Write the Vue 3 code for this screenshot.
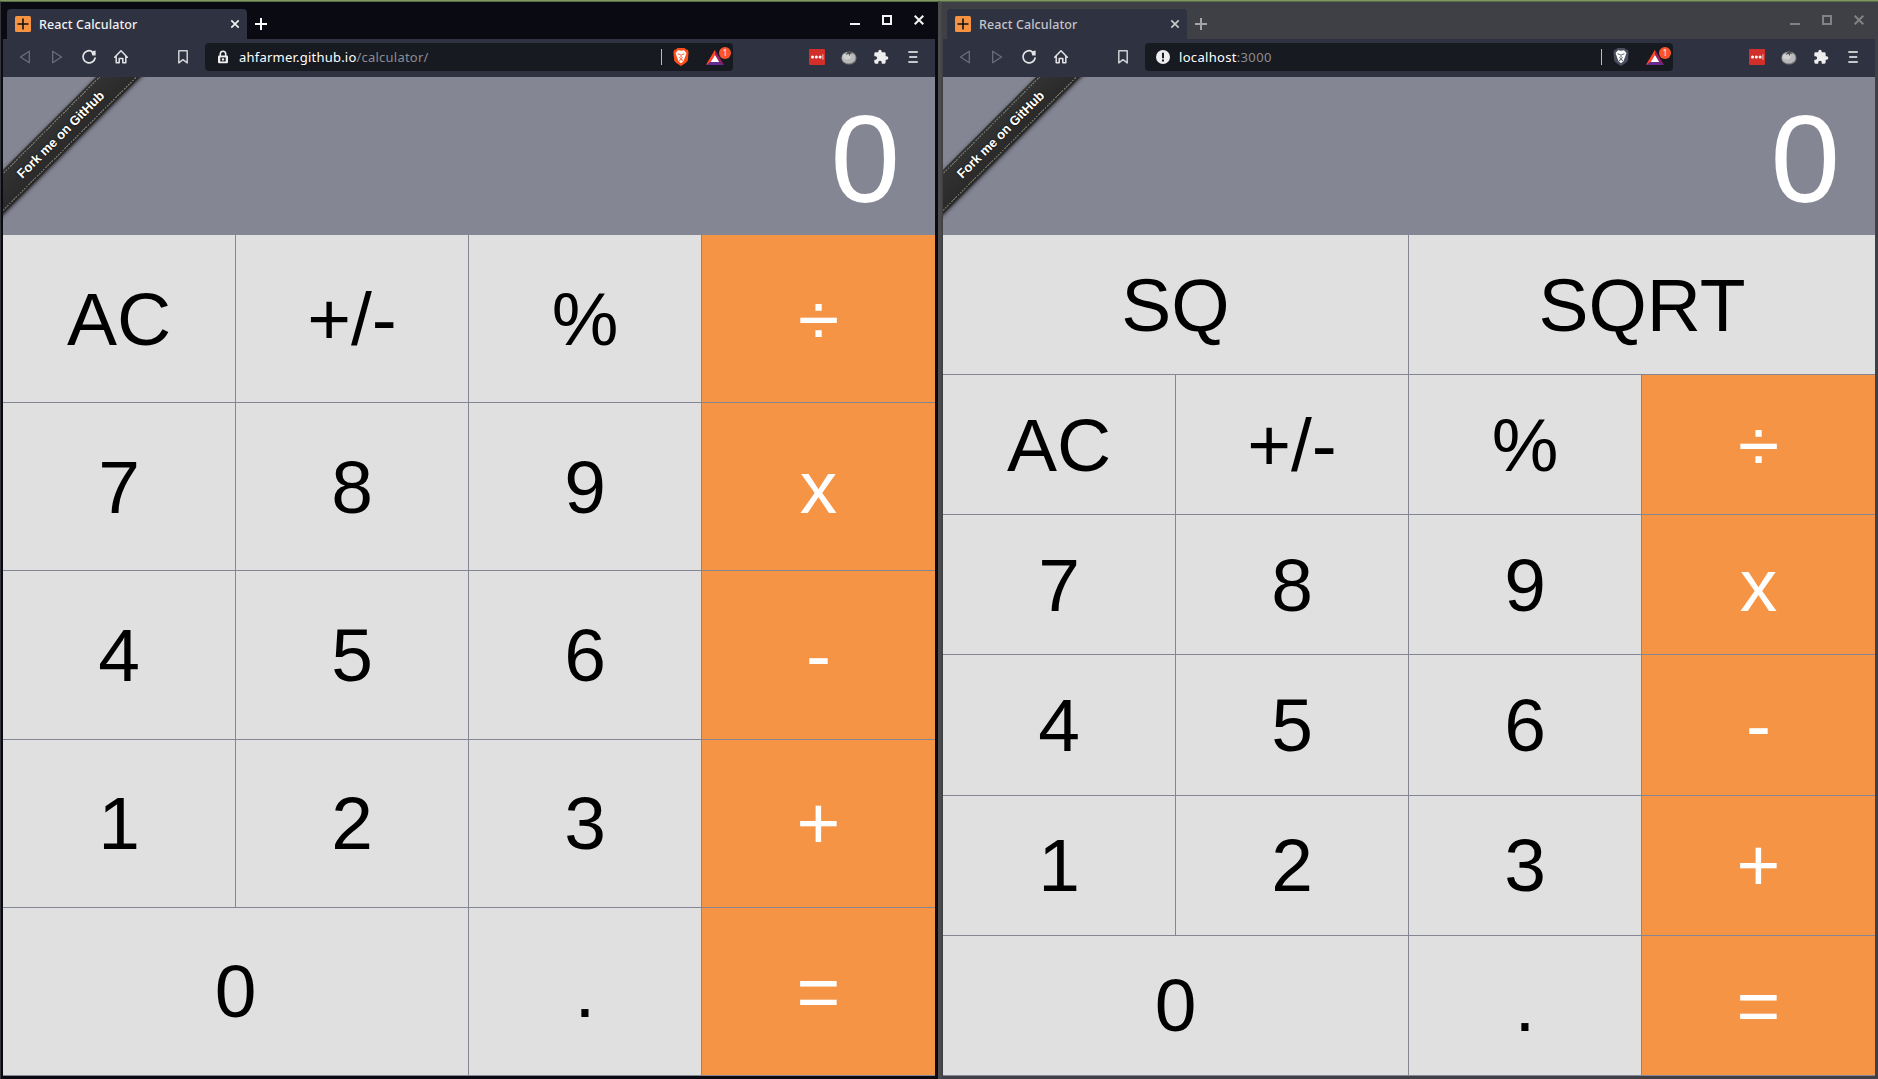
<script setup>
const common = [
  ['AC', '+/-', '%', '÷'],
  ['7', '8', '9', 'x'],
  ['4', '5', '6', '-'],
  ['1', '2', '3', '+'],
  ['0', '.', '='],
]
const windows = [
  { id: 'deployed', active: true, secure: true, host: 'ahfarmer.github.io', path: '/calculator/', rows: common },
  { id: 'local', active: false, secure: false, host: 'localhost', path: ':3000', rows: [['SQ', 'SQRT'], ...common] },
]
const operators = ['÷', 'x', '-', '+', '=']
const isWide = (k, row) => row.length === 2 || (row.length === 3 && k === '0')
</script>

<template>
  <div class="desktop">
    <div v-for="w in windows" :key="w.id" class="window" :class="w.active ? 'active' : 'inactive'">
      <div class="titlebar">
        <div class="tab">
          <svg class="favicon" width="16" height="16" viewBox="0 0 16 16"><rect width="16" height="16" rx="1.5" fill="#f59342" /><path d="M8 2.5v11M2.5 8h11" stroke="#111" stroke-width="1.6" /></svg>
          <span class="title">React Calculator</span>
          <svg class="tab-close" width="10" height="10" viewBox="0 0 10 10"><path d="M1.3 1.3l7.4 7.4M8.700 1.300L1.300 8.700" stroke="currentColor" stroke-width="1.7" /></svg>
        </div>
        <svg class="new-tab" width="12" height="12" viewBox="0 0 12 12"><path d="M6 0v12M0 6h12" stroke="currentColor" stroke-width="2" /></svg>
        <div class="controls">
          <svg width="10" height="10" viewBox="0 0 10 10"><path d="M0 9h10" stroke="currentColor" stroke-width="2" /></svg>
          <svg width="10" height="10" viewBox="0 0 10 10"><path d="M1 1h8v8H1z" stroke="currentColor" stroke-width="2" fill="none" /></svg>
          <svg width="10" height="10" viewBox="0 0 10 10"><path d="M.7.7l8.600 8.600M9.300.7L.7 9.300" stroke="currentColor" stroke-width="2" /></svg>
        </div>
      </div>

      <div class="toolbar">
        <span class="tool dim"><svg width="16" height="16" viewBox="0 0 16 16"><path d="M12.300 2.200v11.600L3.500 8z" stroke="currentColor" stroke-width="1.300" stroke-linejoin="round" fill="none" /></svg></span>
        <span class="tool dim"><svg width="16" height="16" viewBox="0 0 16 16"><path d="M3.700 2.200v11.600L12.500 8z" stroke="currentColor" stroke-width="1.300" stroke-linejoin="round" fill="none" /></svg></span>
        <span class="tool"><svg width="16" height="16" viewBox="0 0 16 16"><path d="M10.600 2.200A6.100 6.100 0 1 0 14.100 9" stroke="currentColor" stroke-width="1.700" fill="none" stroke-linecap="round" /><path d="M10 2.500l4.600-.9v4.800h-3.200z" fill="currentColor" /></svg></span>
        <span class="tool"><svg width="16" height="16" viewBox="0 0 16 16"><path d="M1.700 8.200L8 1.800l6.300 6.400M3.200 7.200v6.600h3V9.600h3.600v4.200h3V7.200" stroke="currentColor" stroke-width="1.500" stroke-linejoin="round" stroke-linecap="round" fill="none" /></svg></span>
        <span class="tool bookmark"><svg width="16" height="16" viewBox="0 0 16 16"><path d="M3.800 1.700h8.400v12.200L8 10.700l-4.200 3.200z" stroke="currentColor" stroke-width="1.500" stroke-linejoin="round" fill="none" /></svg></span>

        <div class="address">
          <svg v-if="w.secure" class="site" width="14" height="14" viewBox="0 0 14 14"><path d="M4.300 6V4a2.700 2.700 0 0 1 5.400 0v2" stroke="#eee" stroke-width="1.600" fill="none" /><rect x="2" y="5.600" width="10" height="7.600" rx="1" fill="#eee" /><rect x="4.300" y="7.400" width="5.400" height="4" fill="#171a21" /><circle cx="7" cy="9.400" r="1.200" fill="#eee" /></svg>
          <svg v-else class="site" width="14" height="14" viewBox="0 0 14 14"><circle cx="7" cy="7" r="7" fill="#eee" /><path d="M7 2.800v5.400M7 9.600v2" stroke="#171a21" stroke-width="2" /></svg>
          <span class="url" :class="w.id"><span class="host">{{ w.host }}</span><span class="path">{{ w.path }}</span></span>
          <span class="divider"></span>
          <svg class="shield" width="16" height="18" viewBox="0 0 16 18">
            <path d="M4.500 0h7l1.600 1.600 1.600.2.900 2.500-.7 7.500c-.2 2-2.100 3.300-6.900 6.200-4.800-2.900-6.700-4.200-6.900-6.200L.4 4.300l.9-2.500 1.600-.2z" :fill="w.active ? '#fa4f1b' : '#4a4e5c'" />
            <path d="M5 2.300l3 .5 3-.5 2.400 2.600-.8 2.600-1.200 3.300-.8 2.200L8 15.200 5.400 13l-.8-2.200-1.200-3.300-.8-2.600z" fill="#fff" />
            <path d="M4.600 5.800l2.200.7M11.400 5.800l-2.200.7M8 6v3M6.300 9.500L8 10.600l1.700-1.100M6 12.500l2-1 2 1" :stroke="w.active ? '#fa4f1b' : '#4a4e5c'" stroke-width="1" fill="none" />
          </svg>
          <span class="rewards">
            <svg width="18" height="15" viewBox="0 0 18 15"><path d="M9 0L0 15l9-5.500z" fill="#ff4724" /><path d="M0 15h18l-5-3.500H4.500z" fill="#662d91" /><path d="M9 0l9 15-6-4L9 5z" fill="#9e1f63" /><path d="M9 0L0 15l5-3.500L9 5z" fill="#ff4724" /><path d="M9 5l4.200 7H4.800z" fill="#fff" /></svg>
            <span class="badge">1</span>
          </span>
        </div>

        <span class="tool first-ext"><svg width="16" height="16" viewBox="0 0 16 16"><rect width="16" height="16" rx="1" fill="#d32f2a" /><circle cx="3.500" cy="8" r="1.500" fill="#fff" /><circle cx="7.300" cy="8" r="1.500" fill="#fff" /><circle cx="11.100" cy="8" r="1.500" fill="#fff" /><path d="M13.900 5.300v5.400" stroke="#fff" stroke-opacity=".75" stroke-width=".9" /></svg></span>
        <span class="tool"><svg width="16" height="16" viewBox="0 0 16 16"><ellipse cx="8" cy="9" rx="7.600" ry="6.600" fill="#777" /><ellipse cx="7.600" cy="8.700" rx="6.900" ry="5.900" fill="#b9b9b9" /><ellipse cx="6" cy="7.500" rx="4" ry="3" fill="#d0d0d0" /><path d="M2.500 4.200l4-.8L6 1.200l1.600 1.500L8.300.7l.6 2.200 3-.6-1.700 1.600 2.800 1-3.700-.3-.7 2.600-1.100-2.500-3 1.500 1.600-2z" fill="#4b4c4d" /></svg></span>
        <span class="tool"><svg width="16" height="16" viewBox="0 0 24 24"><path fill="#eee" d="M20.500 11H19V7a2 2 0 0 0-2-2h-4V3.500a2.500 2.500 0 0 0-5 0V5H4a2 2 0 0 0-2 2v3.800h1.500a2.700 2.700 0 0 1 0 5.400H2V20a2 2 0 0 0 2 2h3.800v-1.500a2.700 2.700 0 0 1 5.400 0V22H17a2 2 0 0 0 2-2v-4h1.500a2.500 2.500 0 0 0 0-5z" /></svg></span>
        <span class="tool"><svg width="16" height="16" viewBox="0 0 16 16"><path d="M3.300 3h9.500M4.200 8h8M3.300 13h9.500" stroke="#c6c7ca" stroke-width="2" /></svg></span>
      </div>

      <div class="page">
        <div class="display">
          <div class="ribbon-corner"><span class="ribbon">Fork me on GitHub</span></div>
          <span class="value">0</span>
        </div>
        <div class="keypad">
          <div v-for="(row, i) in w.rows" :key="i" class="row">
            <div v-for="k in row" :key="k" class="key" :class="{ wide: isWide(k, row), operator: operators.includes(k) }"><span>{{ k }}</span></div>
          </div>
        </div>
      </div>
    </div>
  </div>
</template>

<style>
body { background: #3f3f46; overflow: hidden; }
</style>

<style scoped>
.desktop { display: flex; width: 1878px; height: 1079px; box-sizing: border-box; border-top: 1px solid #7d9a5e; overflow: hidden; background: #3f3f46; }
.window { box-sizing: border-box; display: flex; flex-direction: column; height: 1078px; flex: none; border-top: 1px solid #596b48; }
.active { width: 938px; padding: 0 3px 3px 2px; background: #0a0a13; border-left: 1px solid #34353b; color: #fff; }
.inactive { width: 940px; padding: 0 3px 3px 2px; background: #3f3f46; border-left: 3px solid #4b4b4c; box-shadow: inset 1px 0 #46464a; color: #fff; }
.titlebar { height: 37px; display: flex; align-items: flex-end; flex: none; }
.inactive .titlebar { color: #a5a5a8; }
.tab { margin-left: 4px; width: 240px; height: 30px; box-sizing: border-box; background: #2f3241; border-radius: 4px 4px 0 0; display: flex; align-items: center; padding: 0 7px 0 8px; }
.title { font: 500 12.5px/30px "Noto Sans", sans-serif; letter-spacing: .08px; margin-left: 8px; padding-top: 2px; flex: 1; color: #f1f1f2; white-space: nowrap; }
.inactive .title { color: #c4c5ca; }
.tab-close { color: #f0f0f0; }
.inactive .tab-close { color: #c8c8cc; }
.new-tab { margin: 0 0 9px 8px; }
.controls { margin-left: auto; align-self: flex-start; display: flex; gap: 22px; padding: 13px 11px 0 0; color: #f4f4f4; }
.inactive .controls { color: #828285; }
.toolbar { height: 38px; flex: none; background: #2f3241; display: flex; align-items: center; padding-left: 6px; box-sizing: border-box; padding-bottom: 2px; }
.tool { width: 32px; height: 32px; display: flex; align-items: center; justify-content: center; color: #e4e4e7; flex: none; }
.dim { color: #6b6d79; }
.bookmark { margin-left: 30px; color: #cfcfd3; }
.address { width: 528px; height: 28px; margin-left: 6px; border-radius: 4px; background: #171a21; display: flex; align-items: center; flex: none; box-sizing: border-box; padding-left: 11px; }
.url { margin-left: 9px; flex: 1; font: 13px/28px "Noto Sans", sans-serif; letter-spacing: .22px; white-space: nowrap; }
.local { letter-spacing: .32px; }
.path { color: #8b8d91; }
.divider { width: 1px; height: 16px; background: #b9babd; margin-right: 11px; }
.rewards { position: relative; width: 18px; height: 15px; margin: 0 9px 0 17px; display: flex; }
.badge { position: absolute; left: 13px; top: -3px; width: 12px; height: 12px; border-radius: 50%; background: #fb542b; color: #fff; font: 8px/12px "Noto Sans", sans-serif; text-align: center; }
.first-ext { margin-left: 68px; }
.page { height: 999px; display: flex; flex-direction: column; background: #858694; font-family: "Liberation Sans", Arial, sans-serif; }
.display { position: relative; height: 157.9px; box-sizing: border-box; flex: none; padding: 10px 35px 0; text-align: right; font-size: 125px; line-height: 144px; }
.ribbon-corner { position: absolute; left: 0; top: 0; width: 149px; height: 149px; overflow: hidden; }
.ribbon { position: absolute; left: -58px; top: 42px; width: 231px; height: 31px; box-sizing: border-box; transform: rotate(-45deg); background: linear-gradient(#333, #292929); color: #fff; font: bold 13px/31px "Liberation Sans", Arial, sans-serif; text-align: center; box-shadow: 0 1px 4px rgba(0, 0, 0, .75); text-shadow: 0 0 2px #000; }
.ribbon::before, .ribbon::after { content: ""; position: absolute; left: 0; right: 0; height: 1px; background: repeating-linear-gradient(90deg, #858579 0 2px, transparent 2px 3px); }
.ribbon::before { top: 2px; }
.ribbon::after { bottom: 2px; }
.keypad { flex: 1; display: flex; flex-direction: column; }
.row { flex: 1; display: flex; padding-bottom: 1px; }
.key { width: 25%; box-sizing: border-box; border-right: 1px solid #858694; padding-top: .1px; display: flex; align-items: center; justify-content: center; background: #e0e0e0; color: #000; font-size: 75px; line-height: 86px; }
.key:last-child { border-right: 0; }
.wide { width: 50%; }
.operator { background-color: #f59445; color: #fff; }
</style>
